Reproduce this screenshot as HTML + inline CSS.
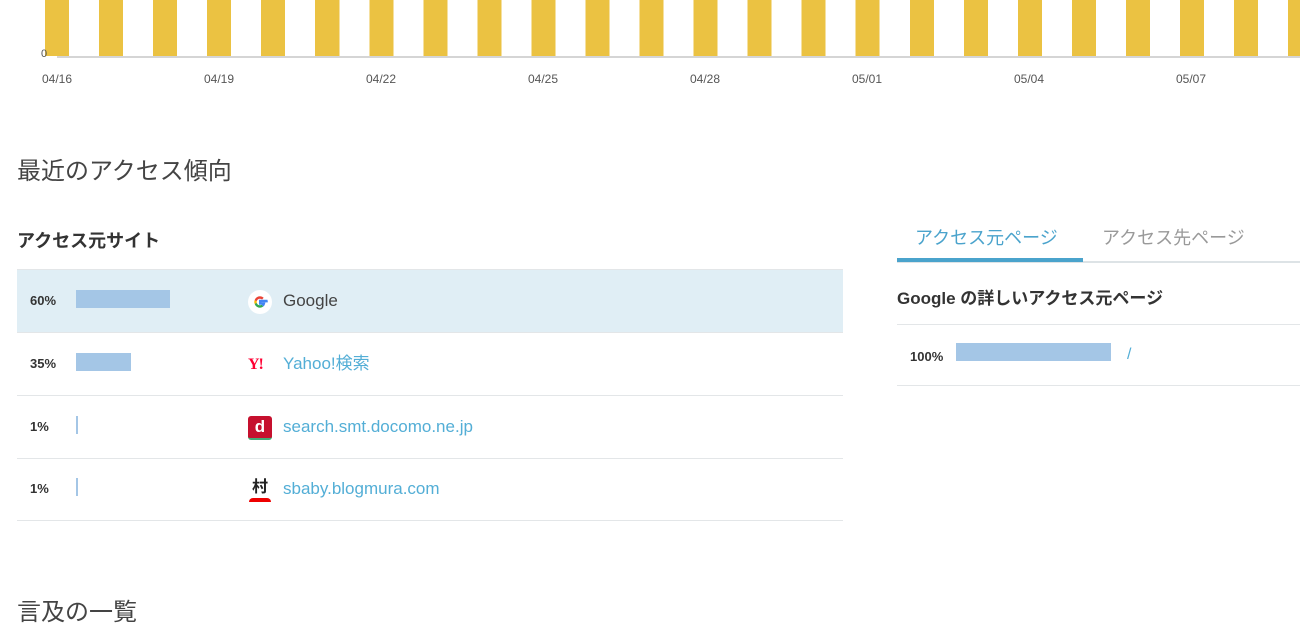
<!DOCTYPE html>
<html><head><meta charset="utf-8"><style>
*{margin:0;padding:0;box-sizing:border-box}
body{width:1300px;height:620px;overflow:hidden;background:#fff;position:relative;font-family:"Liberation Sans","Noto Sans CJK JP",sans-serif;color:#333}
.a{position:absolute}
.bars{left:45px;top:0;width:1255px;height:56px;background:repeating-linear-gradient(90deg,#ebc242 0 24px,transparent 24px 54.05px)}
.axis{left:57px;top:56px;width:1243px;height:2px;background:#d5d5d5}
.lab{top:72px;font-size:12px;color:#555;width:60px;text-align:center}
.row{left:17px;width:826px;height:63px;border-bottom:1px solid #e3e6e8}
.pct{position:absolute;left:13px;top:24px;font-size:13px;line-height:14px;font-weight:bold;color:#333}
.bar{position:absolute;left:59px;top:20px;height:18px;background:#a4c6e6}
.ic{position:absolute;left:231px;top:20px;width:24px;height:24px}
.t{position:absolute;left:266px;top:21px;font-size:17px;line-height:20px;color:#53aed6}
</style></head><body>
<div class="a bars"></div>
<div class="a axis"></div>
<div class="a" style="left:41px;top:48px;font-size:11px;color:#555">0</div>
<div class="a lab" style="left:27px">04/16</div>
<div class="a lab" style="left:189px">04/19</div>
<div class="a lab" style="left:351px">04/22</div>
<div class="a lab" style="left:513px">04/25</div>
<div class="a lab" style="left:675px">04/28</div>
<div class="a lab" style="left:837px">05/01</div>
<div class="a lab" style="left:999px">05/04</div>
<div class="a lab" style="left:1161px">05/07</div>

<div class="a" style="left:17px;top:154px;font-size:24px;line-height:36px;color:#444">最近のアクセス傾向</div>
<div class="a" style="left:17px;top:227px;font-size:18px;font-weight:bold;color:#333">アクセス元サイト</div>

<div class="a" style="left:17px;top:269px;width:826px;height:1px;background:#e3e6e8"></div>
<div class="a row" style="top:270px;background:#e0eef5">
<span class="pct">60%</span><div class="bar" style="width:94px"></div>
<svg class="ic" viewBox="0 0 24 24"><circle cx="12" cy="12" r="12" fill="#fff"/><path d="M18.6 12.4c0-.5 0-1-.1-1.4H12.2v2.6h3.7c-.2.9-.7 1.6-1.4 2.1" stroke="#4285f4" stroke-width="2.4" fill="none"/><path d="M14.5 15.7c-.7.5-1.5.8-2.5.8-2 0-3.7-1.3-4.3-3.1" stroke="#34a853" stroke-width="2.4" fill="none"/><path d="M7.7 13.4c-.3-.9-.3-1.9 0-2.8" stroke="#fbbc05" stroke-width="2.4" fill="none"/><path d="M7.7 10.6c.6-1.8 2.3-3.1 4.3-3.1 1.1 0 2.1.4 2.9 1.1" stroke="#ea4335" stroke-width="2.4" fill="none"/></svg>
<span class="t" style="color:#444">Google</span></div>
<div class="a row" style="top:333px">
<span class="pct">35%</span><div class="bar" style="width:55px"></div>
<div class="ic" style="font:bold 16px/24px 'Liberation Serif',serif;color:#f03;letter-spacing:-1px">Y!</div>
<span class="t">Yahoo!検索</span></div>
<div class="a row" style="top:396px">
<span class="pct">1%</span><div class="bar" style="width:2px"></div>
<div class="ic" style="background:#c6102e;border-radius:3px;border-bottom:2px solid #4a7;color:#fff;font:bold 17px 'Liberation Sans',sans-serif;text-align:center;line-height:21px">d</div>
<span class="t">search.smt.docomo.ne.jp</span></div>
<div class="a row" style="top:458px">
<span class="pct">1%</span><div class="bar" style="width:2px"></div>
<div class="ic" style="font-size:16px;color:#222;text-align:center;font-weight:bold;line-height:20px">村<div style="position:absolute;left:1px;bottom:0;width:22px;height:4px;background:#e00;border-radius:10px 10px 0 0"></div></div>
<span class="t">sbaby.blogmura.com</span></div>

<div class="a" style="left:915px;top:224px;font-size:18px;color:#4aa3cc">アクセス元ページ</div>
<div class="a" style="left:1102px;top:224px;font-size:18px;color:#999">アクセス先ページ</div>
<div class="a" style="left:897px;top:261px;width:403px;height:2px;background:#dde3e6"></div>
<div class="a" style="left:897px;top:258px;width:186px;height:4px;background:#4aa3cc"></div>
<div class="a" style="left:897px;top:284px;font-size:17px;font-weight:bold;color:#333">Google の詳しいアクセス元ページ</div>
<div class="a" style="left:897px;top:324px;width:403px;height:1px;background:#e3e6e8"></div>
<div class="a" style="left:910px;top:349px;font-size:13px;font-weight:bold">100%</div>
<div class="a" style="left:956px;top:343px;width:155px;height:18px;background:#a4c6e6"></div>
<div class="a" style="left:1127px;top:346px;font-size:16px;color:#53aed6">/</div>
<div class="a" style="left:897px;top:385px;width:403px;height:1px;background:#e3e6e8"></div>

<div class="a" style="left:17px;top:595px;font-size:24px;line-height:36px;color:#444">言及の一覧</div>
</body></html>
